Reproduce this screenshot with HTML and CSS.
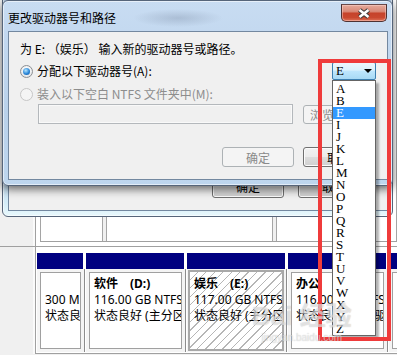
FILE: index.html
```html
<!DOCTYPE html>
<html lang="zh-CN">
<head>
  <meta charset="UTF-8" />
  <meta name="viewport" content="width=device-width, initial-scale=1.0" />
  <title>更改驱动器号和路径</title>
  <link rel="stylesheet" href="styles.css">
</head>
<body>
  <div class="screen">
    <!-- 背景：磁盘管理 -->
    <div class="console">
      <div class="pane-top">
        <div class="side"></div>
        <div class="vol-list">
          <div class="vol-rows">
            <div class="vol-cell c1"></div>
            <div class="vol-cell c2"></div>
            <div class="vol-cell c3"></div>
          </div>
        </div>
      </div>
      <div class="hline"></div>
      <div class="pane-bottom">
        <div class="side"></div>
        <div class="disk-row">
          <div class="part small">
            <div class="bar"></div>
            <div class="part-body">
              <div class="vol">
                <div>&nbsp;</div>
                <div>300 MB NTFS</div>
                <div>状态良好 (系统, 活动, 主分区)</div>
              </div>
            </div>
          </div>
          <div class="part">
            <div class="bar"></div>
            <div class="part-body">
              <div class="vol">
                <div class="name">软件<span class="drv">(D:)</span></div>
                <div>116.00 GB NTFS</div>
                <div>状态良好 (主分区)</div>
              </div>
            </div>
          </div>
          <div class="part selected">
            <div class="bar"></div>
            <div class="part-body">
              <div class="vol">
                <div class="name">娱乐<span class="drv">(E:)</span></div>
                <div>117.00 GB NTFS</div>
                <div>状态良好 (主分区)</div>
              </div>
            </div>
          </div>
          <div class="part">
            <div class="bar"></div>
            <div class="part-body">
              <div class="vol">
                <div class="name">办公<span class="drv">(F:)</span></div>
                <div>116.00 GB NTFS</div>
                <div>状态良好 (逻辑驱动器)</div>
              </div>
            </div>
          </div>
          <div class="part">
            <div class="bar"></div>
            <div class="part-body">
              <div class="vol">
                <div class="name">文档<span class="drv">(G:)</span></div>
                <div>116.00 GB NTFS</div>
                <div>状态良好 (逻辑驱动器)</div>
              </div>
            </div>
          </div>
        </div>
      </div>
    </div>

    <!-- 后面的属性窗口 -->
    <div class="window back">
      <div class="client">
        <div class="buttons">
          <button class="btn">确定</button>
          <button class="btn">取消</button>
        </div>
      </div>
    </div>

    <!-- 更改驱动器号和路径 -->
    <div class="window front">
      <div class="titlebar">
        <span class="title">更改驱动器号和路径</span>
        <button class="close">
          <svg width="14" height="11" viewBox="0 0 14 11">
            <path d="M2.5 2 L11.5 9 M11.5 2 L2.5 9" stroke="#3a3a3a" stroke-width="4.6" fill="none"/>
            <path d="M2.5 2 L11.5 9 M11.5 2 L2.5 9" stroke="#fff" stroke-width="2.6" fill="none"/>
          </svg>
        </button>
      </div>
      <div class="client">
        <p class="prompt">为 E: （娱乐） 输入新的驱动器号或路径。</p>
        <div class="option-row">
          <label class="radio"><span class="dot on"></span>分配以下驱动器号(A):</label>
          <div class="combo">E<span class="arrow"></span></div>
        </div>
        <label class="radio off"><span class="dot"></span>装入以下空白 NTFS 文件夹中(M):</label>
        <div class="path-row">
          <div class="path-input"></div>
          <button class="btn browse" disabled>浏览(R)...</button>
        </div>
        <div class="buttons">
          <button class="btn" disabled>确定</button>
          <button class="btn">取消</button>
        </div>
      </div>
    </div>

    <!-- 下拉列表 -->
    <div class="droplist">
      <div>A</div>
      <div>B</div>
      <div class="sel">E</div>
      <div>I</div>
      <div>J</div>
      <div>K</div>
      <div>L</div>
      <div>M</div>
      <div>N</div>
      <div>O</div>
      <div>P</div>
      <div>Q</div>
      <div>R</div>
      <div>S</div>
      <div>T</div>
      <div>U</div>
      <div>V</div>
      <div>W</div>
      <div>X</div>
      <div>Y</div>
      <div>Z</div>
    </div>

    <div class="mark"></div>

    <div class="watermark">
      <span class="wm-big">Bai 经验</span>
      <span class="wm-small">jingyan.baidu.com</span>
    </div>
  </div>
</body>
</html>
```

FILE: styles.css
```css
* {
  box-sizing: border-box;
}
body {
  margin: 0;
  background: #f0f0f0;
  font-family: "Noto Sans CJK SC", sans-serif;
  font-size: 12px;
  line-height: 16px;
  color: #000;
}
.screen {
  position: relative;
  width: 397px;
  height: 355px;
  overflow: hidden;
}

/* 磁盘管理 */
.console {
  display: flex;
  flex-direction: column;
  height: 355px;
}
.pane-top {
  display: flex;
  height: 246px;
}
.pane-bottom {
  display: flex;
  height: 107px;
}
.side {
  width: 36px;
  flex: none;
  border-right: 1px solid #a0a0a0;
  background: linear-gradient(to right, #f0f0f0 33px, #fafafa 33px);
}
.hline {
  height: 1px;
  background: #a0a0a0;
}
.vol-list {
  flex: 1;
  background: #fff;
  padding: 0 0 4px 4px;
}
.vol-rows {
  display: flex;
  gap: 3px;
  height: 100%;
  background: #f0f0f0;
  border-bottom: 1px solid #a0a0a0;
}
.vol-cell {
  background: #fff;
  border-left: 1px solid #a5a5a5;
  border-right: 1px solid #a5a5a5;
}
.vol-cell.c1 {
  width: 63px;
}
.vol-cell.c2 {
  width: 167px;
}
.vol-cell.c3 {
  flex: 1;
}
.disk-row {
  flex: 1;
  display: flex;
  gap: 1px;
  padding: 6px 0 1px 1px;
  border-bottom: 1px solid #a0a0a0;
  background: #fff;
  overflow: hidden;
}
.part {
  flex: none;
  width: 100px;
  display: flex;
  flex-direction: column;
}
.part.small {
  width: 48px;
}
.bar {
  height: 16px;
  margin-right: 2px;
  background: #000080;
}
.part-body {
  flex: 1;
  display: flex;
  padding: 3px;
  border-right: 1px solid #8c8c8c;
  background: #f4f4f4;
}
.vol {
  flex: 1;
  min-width: 0;
  padding: 3px 0 0 4px;
  border: 1px solid #a0a0a0;
  background: #fff;
  font-family: "Noto Sans", "Noto Sans CJK SC", sans-serif;
  white-space: nowrap;
  overflow: hidden;
}
.vol .name {
  font-weight: bold;
}
.vol .drv {
  margin-left: 12px;
}
.part.selected .part-body {
  padding: 1px 2px 1px 1px;
}
.part.selected .vol {
  padding: 4px 0 0 4px;
  border: 2px solid #a8a8a8;
  background: repeating-linear-gradient(135deg, #fff 0 5px, #b6b6b6 5px 6px);
}

/* 窗口 */
.window {
  position: absolute;
  left: 2px;
  width: 391px;
  display: flex;
  flex-direction: column;
  padding: 0 4px 5px 5px;
  border: 1px solid #56657a;
  border-radius: 6px;
  background: linear-gradient(#c8dcf2, #b9d1ea 60%, #bed6ee);
  box-shadow: inset 0 0 0 1px rgba(255, 255, 255, 0.55);
}
.back {
  top: -120px;
  height: 337px;
  background: linear-gradient(#b9d1ea 85%, #d4ecf8 96%, #e8f8fc);
}
.front {
  top: 0;
  height: 186px;
  box-shadow: inset 0 0 0 1px rgba(255, 255, 255, 0.55), 0 3px 10px rgba(0, 0, 0, 0.6);
}
.titlebar {
  height: 30px;
  flex: none;
  display: flex;
  justify-content: space-between;
  align-items: flex-start;
  background: radial-gradient(ellipse 45px 9px at 170px 17px, rgba(110, 125, 150, 0.3), transparent);
}
.title {
  padding-top: 9px;
}
.close {
  width: 46px;
  height: 18px;
  margin: 3px 1px 0 0;
  padding: 0;
  display: flex;
  align-items: center;
  justify-content: center;
  border: 1px solid #4e3232;
  border-top-color: #6a4a4a;
  border-radius: 0 0 5px 5px;
  background: linear-gradient(#e6aa9c 0%, #d98a78 40%, #c6432b 52%, #c9482f 78%, #de7258 100%);
  box-shadow: inset 0 0 0 1px rgba(255, 220, 210, 0.45);
}
.client {
  flex: 1;
  display: flex;
  flex-direction: column;
  border: 1px solid #7388a0;
  background: #f0f0f0;
}
.back .client {
  justify-content: flex-end;
}
.back .buttons {
  padding: 0 17px 12px 0;
  gap: 14px;
}
.back .btn {
  height: 23px;
}
.prompt {
  margin: 9px 0 0;
  padding-left: 11px;
}
.option-row {
  height: 18px;
  margin-top: 5px;
  padding: 0 11px;
  display: flex;
  align-items: center;
}
.radio {
  display: flex;
  align-items: center;
  gap: 4px;
}
.radio.off {
  margin-top: 6px;
  padding-left: 11px;
  color: #8d8d8d;
}
.dot {
  width: 13px;
  height: 13px;
  display: flex;
  align-items: center;
  justify-content: center;
  border: 1px solid #8c8f93;
  border-radius: 50%;
  background: radial-gradient(circle at 50% 40%, #fff 20%, #dadde0 90%);
}
.dot.on::after {
  content: "";
  width: 7px;
  height: 7px;
  border-radius: 50%;
  background: radial-gradient(circle at 40% 35%, #b4e6ff, #2a86d8 55%, #0d4f96);
}
.radio.off .dot {
  border-color: #c6c6c6;
  background: #f4f4f4;
}
.combo {
  margin-left: auto;
  width: 44px;
  height: 18px;
  display: flex;
  align-items: center;
  justify-content: space-between;
  padding: 0 3px 0 3px;
  border: 1px solid #3c7fb1;
  border-radius: 2px;
  background: linear-gradient(#ecf7fd 0%, #dbf1fc 45%, #bee6fd 50%, #a7d9f5 100%);
  font-family: "Liberation Serif", serif;
  font-size: 13px;
}
.arrow {
  width: 0;
  height: 0;
  border-left: 4px solid transparent;
  border-right: 4px solid transparent;
  border-top: 4px solid #000;
}
.path-row {
  display: flex;
  align-items: flex-start;
  gap: 10px;
  margin-top: 2px;
  padding-left: 29px;
}
.path-input {
  width: 255px;
  height: 20px;
  border: 1px solid #b4b8bc;
  background: #f0f0f0;
  box-shadow: inset 0 0 0 1px #f9f9f9;
}
.btn {
  width: 72px;
  height: 20px;
  padding: 0;
  border: 1px solid #707070;
  border-radius: 3px;
  background: linear-gradient(#f2f2f2 0%, #ebebeb 50%, #dddddd 50%, #cfcfcf 100%);
  box-shadow: inset 0 0 0 1px #fbfbfb;
  font-family: "Noto Sans CJK SC", sans-serif;
  font-size: 12px;
  color: #000;
}
.btn:disabled {
  border-color: #adb2b5;
  background: #f4f4f4;
  box-shadow: none;
  color: #8a8a8a;
}
.btn.browse {
  width: 73px;
  height: 19px;
  margin-top: 1px;
  text-align: left;
  padding-left: 6px;
}
.buttons {
  display: flex;
  justify-content: flex-end;
}
.front .buttons {
  margin-top: 23px;
  padding-right: 12px;
  gap: 9px;
}

/* 下拉列表 */
.droplist {
  position: absolute;
  left: 332px;
  top: 80px;
  width: 44px;
  padding-top: 2px;
  border: 1px solid #646464;
  background: #fff;
  box-shadow: 3px 3px 2px rgba(0, 0, 0, 0.3);
  font-family: "Liberation Serif", serif;
  font-size: 13px;
  line-height: 12px;
}
.droplist div {
  height: 12px;
  padding-left: 3px;
}
.droplist .sel {
  background: #3399ff;
  color: #fff;
}

/* 红框标注 */
.mark {
  position: absolute;
  left: 318px;
  top: 59px;
  width: 73px;
  height: 282px;
  border: 4px solid #ef3b3b;
}

.watermark {
  position: absolute;
  left: 252px;
  top: 300px;
  display: flex;
  flex-direction: column;
  align-items: center;
  color: rgba(255, 255, 255, 0.55);
  text-shadow: 0 0 1px rgba(110, 110, 110, 0.45);
  font-family: "Liberation Sans", "Noto Sans CJK SC", sans-serif;
  pointer-events: none;
}
.wm-big {
  font-size: 26px;
  line-height: 32px;
  font-weight: bold;
}
.wm-small {
  font-size: 10px;
  line-height: 12px;
}
```
